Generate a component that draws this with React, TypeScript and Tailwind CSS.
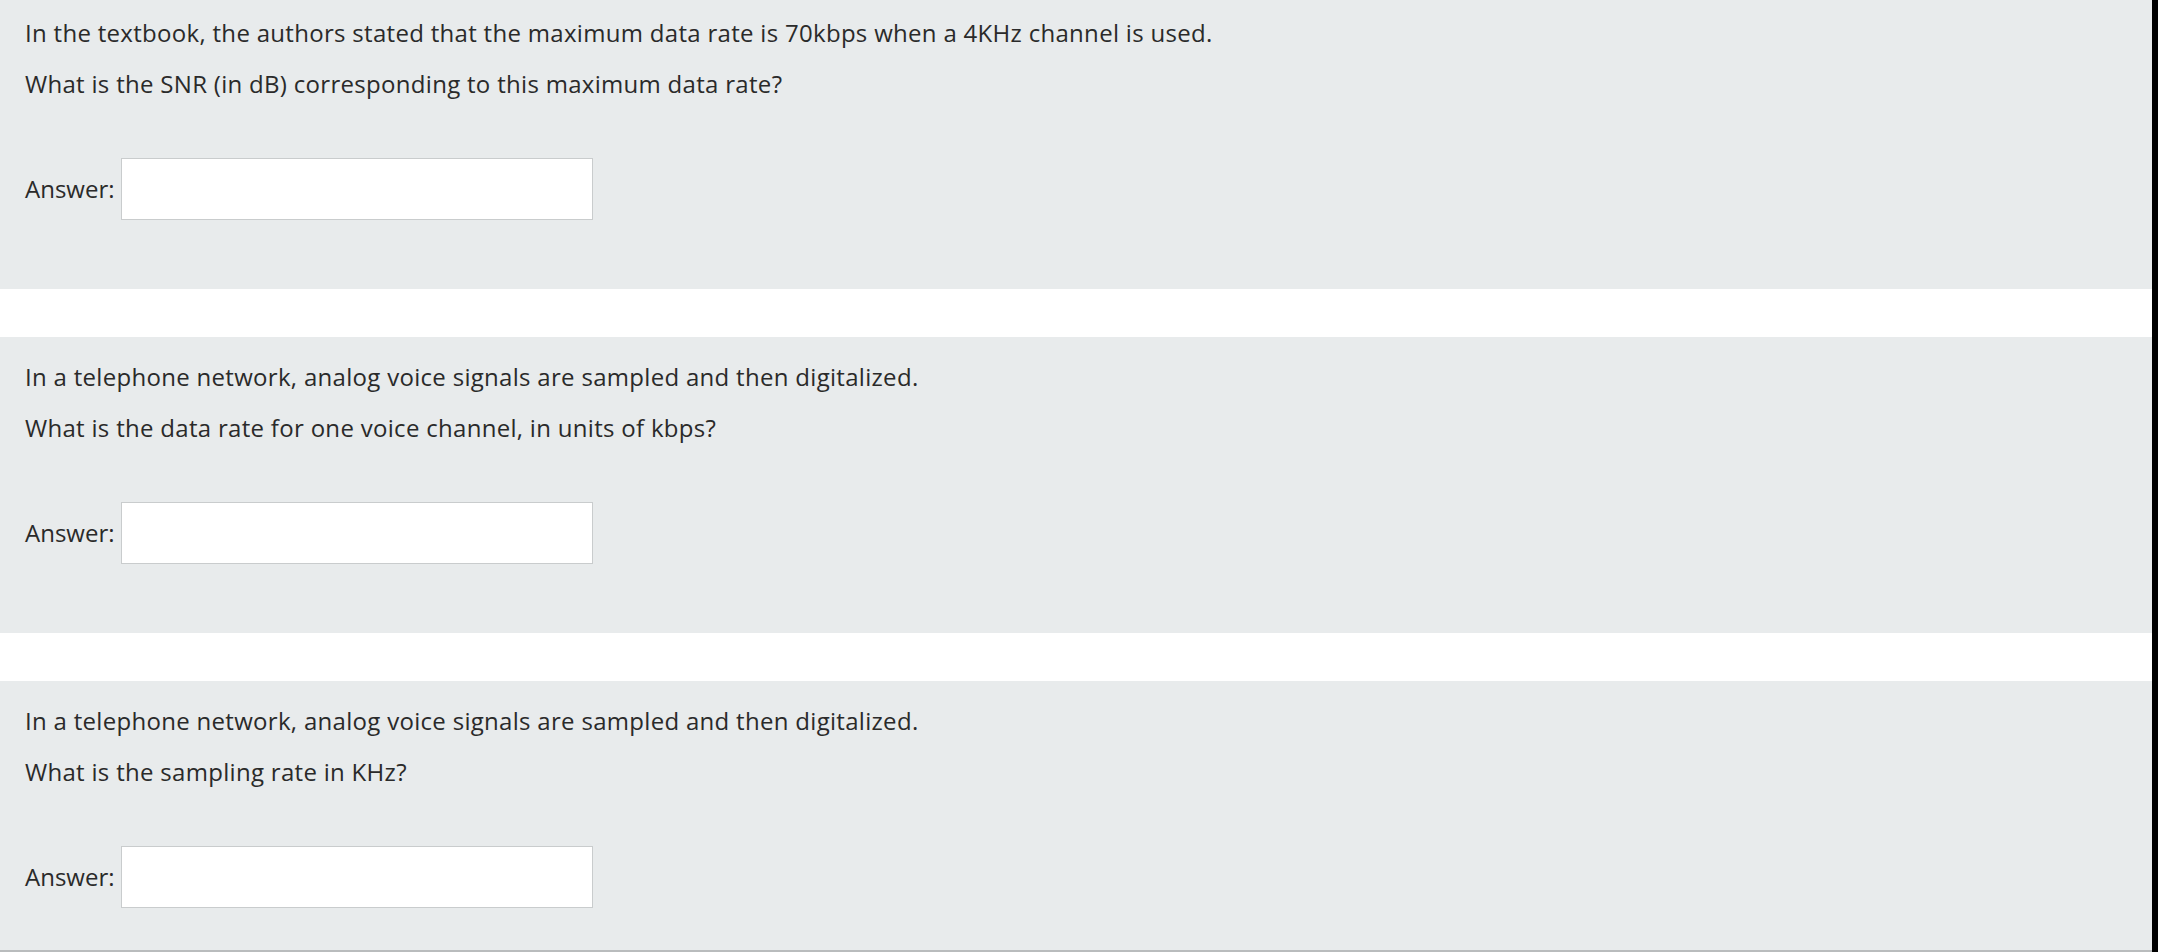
const questions = [
  {
    lines: [
      "In the textbook, the authors stated that the maximum data rate is 70kbps when a 4KHz channel is used.",
      "What is the SNR (in dB) corresponding to this maximum data rate?",
    ],
  },
  {
    lines: [
      "In a telephone network, analog voice signals are sampled and then digitalized.",
      "What is the data rate for one voice channel, in units of kbps?",
    ],
  },
  {
    lines: [
      "In a telephone network, analog voice signals are sampled and then digitalized.",
      "What is the sampling rate in KHz?",
    ],
  },
];

const Question = ({ lines }: { lines: string[] }) => (
  <div className="bg-[#e8ebec] px-[25px] pt-[24px] pb-[69px]">
    <p className="leading-[32px] mb-[19px]">{lines[0]}</p>
    <p className="leading-[32px]">{lines[1]}</p>
    <div className="flex items-center mt-[58px]">
      <label className="w-[96px] shrink-0 tracking-[0px]">Answer:</label>
      <input
        type="text"
        className="w-[472px] h-[62px] bg-white border border-[#c9cccd] outline-none px-3"
      />
    </div>
  </div>
);

export default function App() {
  return (
    <div
      className="flex h-[952px] w-[2158px] overflow-hidden bg-white text-[#2a2a2a] text-[24px] tracking-[0.3px]"
      style={{ fontFamily: '"Open Sans", "Noto Sans", sans-serif' }}
    >
      <div className="flex-1 overflow-hidden border-b-2 border-[#b9bcbd]">
        <div className="-mt-[7px] flex flex-col gap-[48px]">
          {questions.map((q, i) => (
            <Question key={i} lines={q.lines} />
          ))}
        </div>
      </div>
      <div className="w-[6px] bg-black" />
    </div>
  );
}
